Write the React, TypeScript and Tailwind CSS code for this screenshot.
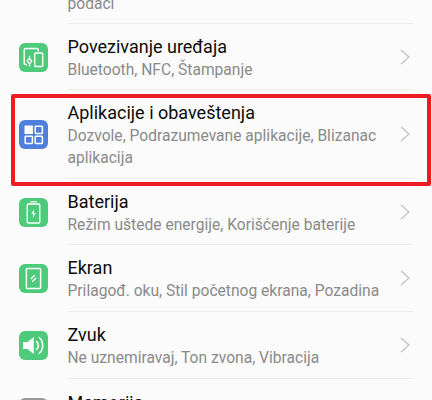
import React from "react";

const G = "#4ecb7a";

function IconBox({ color, children }: { color: string; children?: React.ReactNode }) {
  return (
    <svg width="29" height="29" viewBox="0 0 29 29" className="shrink-0 block">
      <rect x="0" y="0" width="29" height="29" rx="6" fill={color} />
      {children}
    </svg>
  );
}

const DeviceIcon = () => (
  <IconBox color={G}>
    <path d="M8 21.5H6.2a1 1 0 0 1-1-1V7a1.5 1.5 0 0 1 1.5-1.5h11a1.5 1.5 0 0 1 1.5 1.5v1.5" fill="none" stroke="#fff" strokeWidth="1.4" />
    <rect x="15.7" y="10" width="8" height="13.5" rx="1" fill="none" stroke="#fff" strokeWidth="1.4" />
    <path d="M10.5 15.3l2.3 2.8-2.3 2.8-2.3-2.8z" fill="none" stroke="#fff" strokeWidth="1.3" />
    <path d="M10.5 12.8v2.4M10.5 21v2.4" stroke="#fff" strokeWidth="1.2" />
  </IconBox>
);
const AppsIcon = () => (
  <IconBox color="#4f7fdc">
    <rect x="5.5" y="5.5" width="8.5" height="8.5" rx="0.6" fill="#fff" />
    <rect x="16.2" y="6.2" width="7.2" height="7.2" rx="0.6" fill="none" stroke="#fff" strokeWidth="1.5" />
    <rect x="6.2" y="16.2" width="7.2" height="7.2" rx="0.6" fill="none" stroke="#fff" strokeWidth="1.5" />
    <rect x="16.2" y="16.2" width="7.2" height="7.2" rx="0.6" fill="none" stroke="#fff" strokeWidth="1.5" />
  </IconBox>
);
const BatteryIcon = () => (
  <IconBox color={G}>
    <path d="M11.5 3.8h6" stroke="#fff" strokeWidth="1.3" />
    <rect x="8.2" y="6" width="12.6" height="19" rx="1" fill="none" stroke="#fff" strokeWidth="1.3" />
    <path d="M15.3 11l-3 4.8h2l-.6 4.2 3-5h-2z" fill="#fff" />
  </IconBox>
);
const ScreenIcon = () => (
  <IconBox color={G}>
    <rect x="7.4" y="4.4" width="14.2" height="20.2" rx="1" fill="none" stroke="#fff" strokeWidth="1.5" />
    <path d="M11.8 15l4-4M13.2 17.8l4-4" stroke="#fff" strokeWidth="1.3" />
  </IconBox>
);
const SoundIcon = () => (
  <IconBox color={G}>
    <path d="M4 11h4.5l6.2-5v17l-6.2-5H4z" fill="#fff" />
    <path d="M17.6 10.5a5.5 5.5 0 0 1 0 8" fill="none" stroke="#fff" strokeWidth="1.6" strokeLinecap="round" />
    <path d="M20.2 6.5a11 11 0 0 1 0 16" fill="none" stroke="#fff" strokeWidth="1.6" strokeLinecap="round" />
  </IconBox>
);

const Chevron = () => (
  <svg width="10" height="16" viewBox="0 0 10 16" className="shrink-0 block">
    <path d="M1 1l8 7-8 7" fill="none" stroke="#c4c4c4" strokeWidth="1.4" />
  </svg>
);

function Row({ icon, title, sub, h }: { icon: React.ReactNode; title: string; sub: React.ReactNode; h: string }) {
  return (
    <div className={`flex pl-[19px] pr-[19px] ${h}`}>
      <div className="w-[48.5px] shrink-0 flex items-center">{icon}</div>
      <div className="flex-1 flex items-center border-b-[1.5px] border-[#ececec] min-w-0">
        <div className="flex-1 min-w-0 pt-[3px]">
          <div className="text-[18px] leading-[22px] text-[#0c0c0c]">{title}</div>
          <div className="text-[15.6px] leading-[22px] mt-[1px] text-[#8a8a8a] whitespace-nowrap">{sub}</div>
        </div>
        <div className="pr-[3px] pl-2">
          <Chevron />
        </div>
      </div>
    </div>
  );
}

export default function App() {
  return (
    <div className="relative w-[432px] h-[400px] overflow-hidden bg-[#fbfbfb] font-['Roboto',sans-serif]">
      <div className="h-[24px] pl-[67.5px] pr-[19px] overflow-hidden flex items-end">
        <div className="flex-1 h-full border-b-[1.5px] border-[#ececec] flex items-end pb-[8px]">
          <span className="text-[15.6px] leading-[22px] text-[#8a8a8a]">podaci</span>
        </div>
      </div>
      <Row h="h-[66px]" icon={<DeviceIcon />} title="Povezivanje uređaja" sub="Bluetooth, NFC, Štampanje" />
      <Row
        h="h-[89px]"
        icon={<AppsIcon />}
        title="Aplikacije i obaveštenja"
        sub={
          <>
            Dozvole, Podrazumevane aplikacije, Blizanac
            <br />
            aplikacija
          </>
        }
      />
      <Row h="h-[66px]" icon={<BatteryIcon />} title="Baterija" sub="Režim uštede energije, Korišćenje baterije" />
      <Row h="h-[67px]" icon={<ScreenIcon />} title="Ekran" sub="Prilagođ. oku, Stil početnog ekrana, Pozadina" />
      <Row h="h-[67px]" icon={<SoundIcon />} title="Zvuk" sub="Ne uznemiravaj, Ton zvona, Vibracija" />
      <div className="flex pl-[19px] pt-[13px]">
        <div className="w-[48.5px] shrink-0">
          <div className="w-[29px] h-[29px] rounded-[6px] bg-[#9a9a9a] mt-[6px]" />
        </div>
        <div className="text-[18px] leading-[22px] text-[#0c0c0c]">Memorija</div>
      </div>
      <div className="absolute left-[11px] top-[94px] w-[420px] h-[92px] border-[4px] border-[#ed1c24] rounded-[2px]" />
    </div>
  );
}
